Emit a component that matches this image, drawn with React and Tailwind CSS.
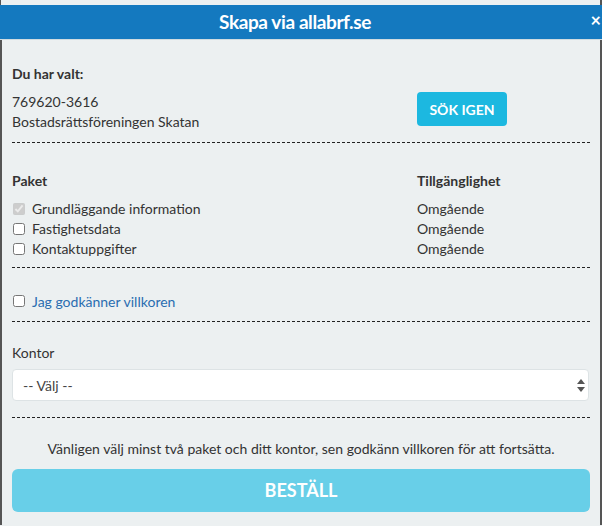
import React from 'react';

const packages = [
  { name: 'Grundläggande information', locked: true },
  { name: 'Fastighetsdata' },
  { name: 'Kontaktuppgifter' },
];

function Divider({ className = '' }) {
  return <div className={`h-0 border-t border-dashed border-[#222] ${className}`} />;
}

export default function App() {
  return (
    <div className="w-[602px] h-[526px] overflow-hidden bg-[#ecf0f1] text-[14px] text-[#333] font-['Lato','Open_Sans',sans-serif]">
      <div className="h-[5px] border-l border-r-2 border-[#555] bg-[#ecf0f1]" />
      <div className="relative h-[35px] bg-[#1479bf] flex items-center justify-center pr-[12px] border-b border-[#cfdbe0]">
        <h1 className="text-white font-bold text-[19px] tracking-[-0.4px]">Skapa via allabrf.se</h1>
        <span className="absolute right-[1px] top-[6px] text-white font-bold text-[18px] leading-none">×</span>
      </div>

      <div className="h-[485px] border-l-2 border-r-2 border-[#555] px-[10px] pt-[24px]">
        {/* Selected association */}
        <p className="font-bold leading-[20px]">Du har valt:</p>
        <div className="flex mt-[8px]">
          <div className="w-[405px] leading-[20px]">
            <p>769620-3616</p>
            <p>Bostadsrättsföreningen Skatan</p>
          </div>
          <button className="w-[90px] h-[34px] rounded-[4px] bg-[#1cb8e0] text-white font-bold text-[14px] uppercase">
            Sök igen
          </button>
        </div>
        <Divider className="mt-[10px]" />

        {/* Packages */}
        <div className="flex mt-[28px] leading-[20px]">
          <div className="w-[405px]">
            <p className="font-bold">Paket</p>
            <div className="mt-[8px]">
              {packages.map((p) => (
                <label key={p.name} className="flex items-center h-[20px]">
                  <input
                    type="checkbox"
                    defaultChecked={p.locked}
                    disabled={p.locked}
                    className="w-[12px] h-[12px] ml-[1px] mr-[7px]"
                  />
                  <span>{p.name}</span>
                </label>
              ))}
            </div>
          </div>
          <div>
            <p className="font-bold">Tillgänglighet</p>
            <div className="mt-[8px]">
              {packages.map((p) => (
                <p key={p.name} className="h-[20px]">Omgående</p>
              ))}
            </div>
          </div>
        </div>
        <Divider className="mt-[8px]" />

        {/* Terms */}
        <label className="flex items-center h-[20px] mt-[23px]">
          <input type="checkbox" className="w-[12px] h-[12px] ml-[1px] mr-[7px]" />
          <a className="text-[#2a6db0]">Jag godkänner villkoren</a>
        </label>
        <Divider className="mt-[10px]" />

        {/* Office */}
        <p className="mt-[21px] leading-[20px]">Kontor</p>
        <div className="relative mt-[6px] mr-[1px]">
          <select className="appearance-none w-full h-[32px] rounded-[4px] bg-white border border-[#dde3e5] pl-[10px] text-[14px] text-[#444] font-['Lato',sans-serif]">
            <option>-- Välj --</option>
          </select>
          <svg className="absolute right-[4px] top-[10px] pointer-events-none" width="8" height="13" viewBox="0 0 8 13">
            <path d="M4 0 L8 5 H0 Z" fill="#555" />
            <path d="M0 8 H8 L4 13 Z" fill="#555" />
          </svg>
        </div>
        <Divider className="mt-[16px]" />

        {/* Submit */}
        <p className="mt-[21px] leading-[20px] text-center text-[14px]">
          Vänligen välj minst två paket och ditt kontor, sen godkänn villkoren för att fortsätta.
        </p>
        <button className="mt-[10px] w-full h-[43px] rounded-[6px] bg-[#68cfe8] text-white font-bold text-[18px]">
          BESTÄLL
        </button>
      </div>
    </div>
  );
}
